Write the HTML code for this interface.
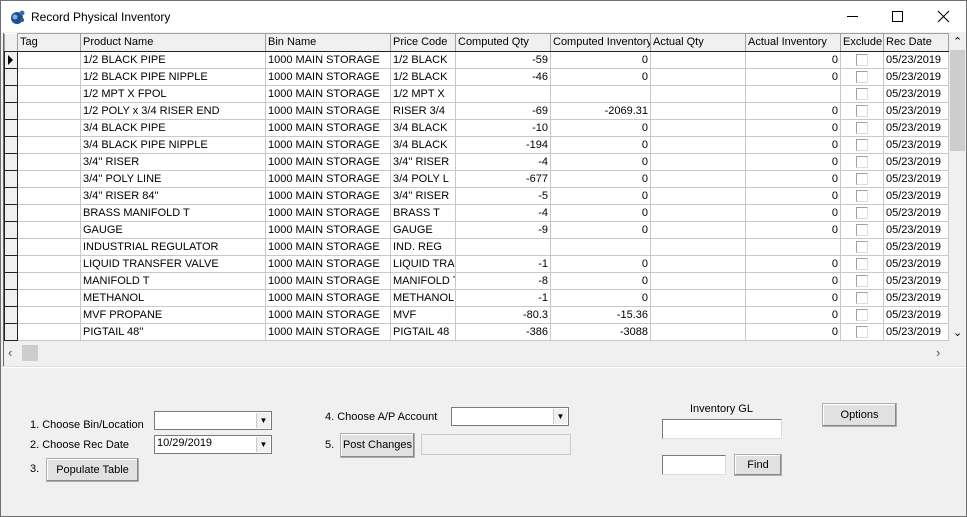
<!DOCTYPE html>
<html><head><meta charset="utf-8"><style>
*{margin:0;padding:0;box-sizing:border-box}
body{width:967px;height:517px;background:#fff;font-family:"Liberation Sans",Arial,sans-serif;font-size:11px;color:#000;position:relative;overflow:hidden}
.win{position:absolute;left:0;top:0;width:967px;height:517px;border:1px solid #6f6f6f;background:#f0f0f0}
.title{position:absolute;left:0;top:0;width:965px;height:31px;background:#fff}
.title .t{position:absolute;left:30px;top:9px;font-size:12px}
.grid{position:absolute;left:2px;top:32px;width:963px;height:333px;background:#f0f0f0;border-left:1px solid #696969}
table{position:absolute;left:0;top:0;width:944px;border-collapse:collapse;table-layout:fixed;background:#fff}
td{height:17px;border:1px solid #c8c8c8;white-space:nowrap;overflow:hidden;padding:0 2px;line-height:15px}
tr.h td{background:#f0f0f0;border-color:#a0a0a0 #a0a0a0 #000 #a0a0a0;border-bottom:1px solid #222;height:18px}
td.rh{background:#f0f0f0;border:1px solid #222;border-top:0;border-right:1px solid #222;padding:0}
td.r{text-align:right}
td.c{text-align:center}
.cb{display:inline-block;width:12px;height:12px;border:1px solid #a0a0a0;border-right-color:#ddd;border-bottom-color:#ddd;background:#fff;vertical-align:middle}
.vs{position:absolute;left:945px;top:0;width:17px;height:308px;background:#f0f0f0}
.hs{position:absolute;left:0;top:311px;width:945px;height:18px;background:#f0f0f0}
.lbl{position:absolute;font-size:11px}
.combo{position:absolute;height:19px;background:#fff;border:1px solid #7a7a7a}
.combo .ar{position:absolute;right:1px;top:1px;width:14px;height:15px;background:#f0f0f0;border-left:1px solid #ccc;font-size:8px;text-align:center;line-height:15px}
.btn{position:absolute;background:#e1e1e1;border:1px solid #adadad;box-shadow:inset -1px -1px #888,inset 1px 1px #fff;text-align:center;font-size:11px}
.tb{position:absolute;background:#fff;border:1px solid #7a7a7a;border-right-color:#ddd;border-bottom-color:#ddd}
</style></head><body><div class="win">
<div class="title">
<svg style="position:absolute;left:9px;top:8px" width="16" height="16" viewBox="0 0 16 16"><circle cx="7" cy="9" r="6" fill="#1c4f8c"/><circle cx="5" cy="8" r="2.5" fill="#7fb0e0"/><circle cx="12" cy="4" r="2.5" fill="#3070b0"/><circle cx="12" cy="11" r="2" fill="#2a5a99"/></svg>
<div class="t">Record Physical Inventory</div>
<div style="position:absolute;left:846px;top:15px;width:11px;height:1px;background:#000"></div>
<div style="position:absolute;left:891px;top:10px;width:11px;height:11px;border:1px solid #000"></div>
<svg style="position:absolute;left:936px;top:9px" width="13" height="13"><path d="M1 1L12 12M12 1L1 12" stroke="#000" stroke-width="1.1"/></svg>
</div>
<div class="grid">
<table>
<colgroup><col style="width:13px"><col style="width:63px"><col style="width:185px"><col style="width:125px"><col style="width:65px"><col style="width:95px"><col style="width:100px"><col style="width:95px"><col style="width:95px"><col style="width:43px"><col style="width:65px"></colgroup>
<tr class="h"><td class="rh" style="border-bottom:1px solid #222"></td><td>Tag</td><td>Product Name</td><td>Bin Name</td><td>Price Code</td><td>Computed Qty</td><td>Computed Inventory</td><td>Actual Qty</td><td>Actual Inventory</td><td>Exclude</td><td>Rec Date</td></tr>
<tr><td class="rh"><span style="display:inline-block;margin-left:3px;border-left:5px solid #000;border-top:5px solid transparent;border-bottom:5px solid transparent;vertical-align:middle"></span></td><td></td><td>1/2 BLACK PIPE</td><td>1000 MAIN STORAGE</td><td>1/2 BLACK</td><td class="r">-59</td><td class="r">0</td><td></td><td class="r">0</td><td class="c"><span class="cb"></span></td><td>05/23/2019</td></tr>
<tr><td class="rh"></td><td></td><td>1/2 BLACK PIPE NIPPLE</td><td>1000 MAIN STORAGE</td><td>1/2 BLACK</td><td class="r">-46</td><td class="r">0</td><td></td><td class="r">0</td><td class="c"><span class="cb"></span></td><td>05/23/2019</td></tr>
<tr><td class="rh"></td><td></td><td>1/2 MPT X FPOL</td><td>1000 MAIN STORAGE</td><td>1/2 MPT X</td><td class="r"></td><td class="r"></td><td></td><td class="r"></td><td class="c"><span class="cb"></span></td><td>05/23/2019</td></tr>
<tr><td class="rh"></td><td></td><td>1/2 POLY x 3/4 RISER END</td><td>1000 MAIN STORAGE</td><td>RISER 3/4</td><td class="r">-69</td><td class="r">-2069.31</td><td></td><td class="r">0</td><td class="c"><span class="cb"></span></td><td>05/23/2019</td></tr>
<tr><td class="rh"></td><td></td><td>3/4 BLACK PIPE</td><td>1000 MAIN STORAGE</td><td>3/4 BLACK</td><td class="r">-10</td><td class="r">0</td><td></td><td class="r">0</td><td class="c"><span class="cb"></span></td><td>05/23/2019</td></tr>
<tr><td class="rh"></td><td></td><td>3/4 BLACK PIPE NIPPLE</td><td>1000 MAIN STORAGE</td><td>3/4 BLACK</td><td class="r">-194</td><td class="r">0</td><td></td><td class="r">0</td><td class="c"><span class="cb"></span></td><td>05/23/2019</td></tr>
<tr><td class="rh"></td><td></td><td>3/4'' RISER</td><td>1000 MAIN STORAGE</td><td>3/4'' RISER</td><td class="r">-4</td><td class="r">0</td><td></td><td class="r">0</td><td class="c"><span class="cb"></span></td><td>05/23/2019</td></tr>
<tr><td class="rh"></td><td></td><td>3/4'' POLY LINE</td><td>1000 MAIN STORAGE</td><td>3/4 POLY L</td><td class="r">-677</td><td class="r">0</td><td></td><td class="r">0</td><td class="c"><span class="cb"></span></td><td>05/23/2019</td></tr>
<tr><td class="rh"></td><td></td><td>3/4'' RISER 84''</td><td>1000 MAIN STORAGE</td><td>3/4'' RISER</td><td class="r">-5</td><td class="r">0</td><td></td><td class="r">0</td><td class="c"><span class="cb"></span></td><td>05/23/2019</td></tr>
<tr><td class="rh"></td><td></td><td>BRASS MANIFOLD T</td><td>1000 MAIN STORAGE</td><td>BRASS T</td><td class="r">-4</td><td class="r">0</td><td></td><td class="r">0</td><td class="c"><span class="cb"></span></td><td>05/23/2019</td></tr>
<tr><td class="rh"></td><td></td><td>GAUGE</td><td>1000 MAIN STORAGE</td><td>GAUGE</td><td class="r">-9</td><td class="r">0</td><td></td><td class="r">0</td><td class="c"><span class="cb"></span></td><td>05/23/2019</td></tr>
<tr><td class="rh"></td><td></td><td>INDUSTRIAL REGULATOR</td><td>1000 MAIN STORAGE</td><td>IND. REG</td><td class="r"></td><td class="r"></td><td></td><td class="r"></td><td class="c"><span class="cb"></span></td><td>05/23/2019</td></tr>
<tr><td class="rh"></td><td></td><td>LIQUID TRANSFER VALVE</td><td>1000 MAIN STORAGE</td><td>LIQUID TRA</td><td class="r">-1</td><td class="r">0</td><td></td><td class="r">0</td><td class="c"><span class="cb"></span></td><td>05/23/2019</td></tr>
<tr><td class="rh"></td><td></td><td>MANIFOLD T</td><td>1000 MAIN STORAGE</td><td>MANIFOLD T</td><td class="r">-8</td><td class="r">0</td><td></td><td class="r">0</td><td class="c"><span class="cb"></span></td><td>05/23/2019</td></tr>
<tr><td class="rh"></td><td></td><td>METHANOL</td><td>1000 MAIN STORAGE</td><td>METHANOL</td><td class="r">-1</td><td class="r">0</td><td></td><td class="r">0</td><td class="c"><span class="cb"></span></td><td>05/23/2019</td></tr>
<tr><td class="rh"></td><td></td><td>MVF PROPANE</td><td>1000 MAIN STORAGE</td><td>MVF</td><td class="r">-80.3</td><td class="r">-15.36</td><td></td><td class="r">0</td><td class="c"><span class="cb"></span></td><td>05/23/2019</td></tr>
<tr><td class="rh"></td><td></td><td>PIGTAIL 48''</td><td>1000 MAIN STORAGE</td><td>PIGTAIL 48</td><td class="r">-386</td><td class="r">-3088</td><td></td><td class="r">0</td><td class="c"><span class="cb"></span></td><td>05/23/2019</td></tr>
</table>
<div class="vs"><div style="position:absolute;top:2px;left:4px;font-size:11px">&#8963;</div><div style="position:absolute;left:1px;top:17px;width:15px;height:101px;background:#cdcdcd"></div><div style="position:absolute;bottom:2px;left:4px;font-size:11px">&#8964;</div></div>
<div class="hs"><div style="position:absolute;left:4px;top:1px;font-size:13px;color:#555">&#8249;</div><div style="position:absolute;left:18px;top:1px;width:16px;height:16px;background:#cdcdcd"></div><div style="position:absolute;left:932px;top:1px;font-size:13px;color:#555">&#8250;</div></div>
</div>
<div style="position:absolute;left:0;top:365px;width:965px;height:2px;background:#fff;border-top:1px solid #ddd"></div>

<div class="lbl" style="left:29px;top:418px">1. Choose Bin/Location</div>
<div class="combo" style="left:153px;top:410px;width:118px"><div class="ar">&#9660;</div></div>
<div class="lbl" style="left:29px;top:438px">2. Choose Rec Date</div>
<div class="combo" style="left:153px;top:434px;width:118px"><span style="position:absolute;left:2px;top:1px">10/29/2019</span><div class="ar">&#9660;</div></div>
<div class="lbl" style="left:29px;top:462px">3.</div>
<div class="btn" style="left:45px;top:457px;width:93px;height:24px;line-height:22px">Populate Table</div>

<div class="lbl" style="left:324px;top:410px">4. Choose A/P Account</div>
<div class="combo" style="left:450px;top:406px;width:118px"><div class="ar">&#9660;</div></div>
<div class="lbl" style="left:324px;top:438px">5.</div>
<div class="btn" style="left:339px;top:432px;width:75px;height:25px;line-height:23px">Post Changes</div>
<div class="tb" style="left:420px;top:433px;width:150px;height:21px;background:#f0f0f0;border-color:#ccc"></div>

<div class="lbl" style="left:689px;top:402px">Inventory GL</div>
<div class="tb" style="left:661px;top:418px;width:120px;height:20px"></div>
<div class="tb" style="left:661px;top:454px;width:64px;height:20px"></div>
<div class="btn" style="left:733px;top:453px;width:48px;height:22px;line-height:20px">Find</div>
<div class="btn" style="left:821px;top:402px;width:75px;height:24px;line-height:22px">Options</div>
</div></body></html>
